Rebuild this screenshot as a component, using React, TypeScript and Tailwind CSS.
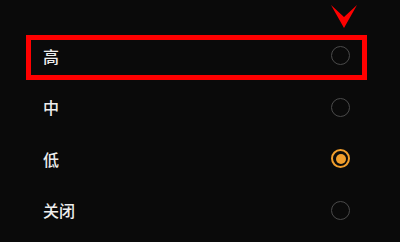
import { useState } from "react";

const options = ["高", "中", "低", "关闭"];

function Radio({ checked }: { checked: boolean }) {
  return checked ? (
    <span className="flex h-[19px] w-[19px] items-center justify-center rounded-full border-[2px] border-[#f19e2c]">
      <span className="h-[10px] w-[10px] rounded-full bg-[#f19e2c]" />
    </span>
  ) : (
    <span className="h-[19px] w-[19px] rounded-full border-[1.5px] border-[#4a4a4a]" />
  );
}

export default function App() {
  const [selected, setSelected] = useState(2);

  return (
    <div className="relative h-[242px] w-[400px] overflow-hidden bg-[#0a0a0a] font-['Noto_Sans_CJK_SC',sans-serif]">
      <ul className="pt-[30px]">
        {options.map((label, i) => (
          <li
            key={label}
            onClick={() => setSelected(i)}
            className="flex h-[51.5px] items-center justify-between pl-[43px] pr-[50px]"
          >
            <span className="text-[16px] font-medium leading-none text-[#ededed]">{label}</span>
            <Radio checked={selected === i} />
          </li>
        ))}
      </ul>

      {/* annotation overlay */}
      <div className="pointer-events-none absolute left-[26px] top-[35px] h-[45px] w-[341px] border-[5px] border-[#ff0000]" />
      <svg className="pointer-events-none absolute left-[330px] top-[4px]" width="28" height="25" viewBox="0 0 28 25">
        <polygon points="1,1 14,13 27,1 14,24" fill="#ff0000" />
      </svg>
    </div>
  );
}
